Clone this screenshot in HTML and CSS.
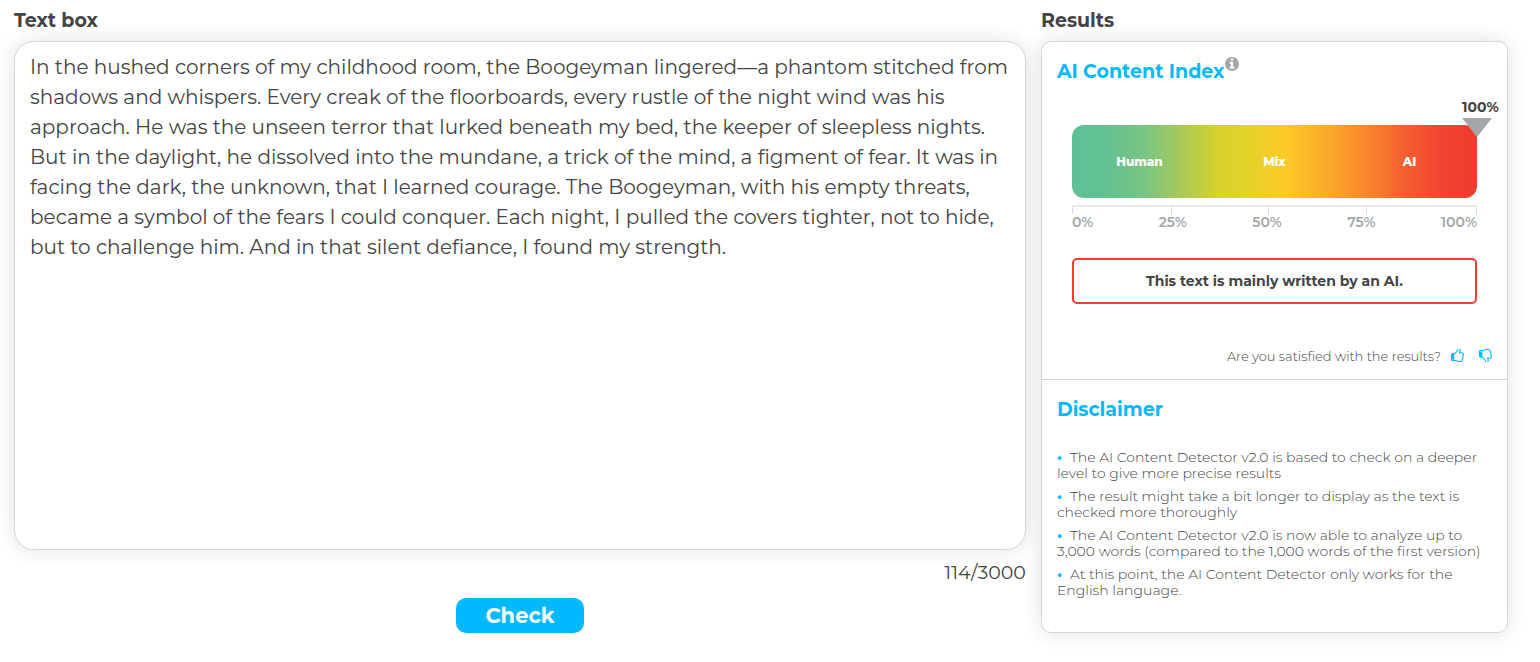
FILE: index.html
```html
<!DOCTYPE html>
<html lang="en">

<head>
    <meta charset="UTF-8">
    <meta name="viewport" content="width=device-width, initial-scale=1.0">
    <title>AI Content Detector</title>

    <link rel="stylesheet" href="styles.css">
</head>

<body>
    <main class="detector">
        <form class="editor">
            <label class="heading" for="text">Text box</label>
            <textarea class="text" id="text" spellcheck="false">In the hushed corners of my childhood room, the Boogeyman lingered—a phantom stitched from shadows and whispers. Every creak of the floorboards, every rustle of the night wind was his approach. He was the unseen terror that lurked beneath my bed, the keeper of sleepless nights. But in the daylight, he dissolved into the mundane, a trick of the mind, a figment of fear. It was in facing the dark, the unknown, that I learned courage. The Boogeyman, with his empty threats, became a symbol of the fears I could conquer. Each night, I pulled the covers tighter, not to hide, but to challenge him. And in that silent defiance, I found my strength.</textarea>
            <p class="counter">114/3000</p>
            <button class="check" type="button">Check</button>
        </form>

        <section class="results">
            <h2 class="heading">Results</h2>

            <div class="card">
                <div class="index">
                    <h3 class="title">AI Content Index<svg class="info" viewBox="128 128 1536 1536"><path d="M1152 1376v-160q0-14-9-23t-23-9h-96v-512q0-14-9-23t-23-9h-320q-14 0-23 9t-9 23v160q0 14 9 23t23 9h96v320h-96q-14 0-23 9t-9 23v160q0 14 9 23t23 9h448q14 0 23-9t9-23zm-128-896v-160q0-14-9-23t-23-9h-192q-14 0-23 9t-9 23v160q0 14 9 23t23 9h192q14 0 23-9t9-23zm640 416q0 209-103 385.500t-279.500 279.500-385.500 103-385.500-103-279.500-279.500-103-385.500 103-385.500 279.500-279.500 385.500-103 385.500 103 279.500 279.500 103 385.500z"/></svg></h3>

                    <div class="gauge">
                        <div class="bar">
                            <span>Human</span>
                            <span>Mix</span>
                            <span>AI</span>
                            <div class="marker" style="left: 100%">100%</div>
                        </div>
                        <div class="ticks"><i></i><i></i><i></i><i></i></div>
                        <div class="scale">
                            <span>0%</span>
                            <span>25%</span>
                            <span>50%</span>
                            <span>75%</span>
                            <span>100%</span>
                        </div>
                        <p class="verdict">This text is mainly written by an AI.</p>
                    </div>

                    <div class="feedback">
                        <span>Are you satisfied with the results?</span>
                        <button class="vote" type="button" aria-label="Yes">
                            <svg viewBox="0 128 1536 1536"><path id="thumb" d="M256 1344q0-26-19-45t-45-19-45 19-19 45 19 45 45 19 45-19 19-45zm1152-576q0-51-39-89.500t-89-38.500h-352q0-58 48-159.500t48-160.500q0-98-32-145t-128-47q-26 26-38 85t-30.500 125.500-59.500 109.500q-22 23-77 91-4 5-23 30t-31.500 41-34.500 42.500-40 44-38.500 35.500-40 27-35.500 9h-32v640h32q13 0 31.500 3t33 6.500 38 11 35 11.500 35.500 12.500 29 10.500q211 73 342 73h121q192 0 192-167 0-26-5-56 30-16 47.500-52.500t17.500-73.500-18-69q53-50 53-119 0-25-10-55.500t-25-47.500q32-1 53.500-47t21.500-81zm128-1q0 89-49 163 9 33 9 69 0 77-38 144 3 21 3 43 0 101-60 178 1 139-85 219.500t-227 80.500h-129q-96 0-189.500-22.500t-216.500-65.500q-116-40-138-40h-288q-53 0-90.500-37.500t-37.500-90.500v-640q0-53 37.500-90.500t90.500-37.500h274q36-24 137-155 58-75 107-128 24-25 35.500-85.500t30.500-126.500 62-108q39-37 90-37 84 0 151 32.500t102 101.500 35 186q0 93-48 192h176q104 0 180 76t76 179z"/></svg>
                        </button>
                        <button class="vote" type="button" aria-label="No">
                            <svg viewBox="0 128 1536 1536"><use href="#thumb" transform="translate(0 1792) scale(1 -1)"/></svg>
                        </button>
                    </div>
                </div>

                <div class="disclaimer">
                    <h3 class="title">Disclaimer</h3>
                    <ul class="notes">
                        <li>The AI Content Detector v2.0 is based to check on a deeper level to give more precise results</li>
                        <li>The result might take a bit longer to display as the text is checked more thoroughly</li>
                        <li>The AI Content Detector v2.0 is now able to analyze up to 3,000 words (compared to the 1,000 words of the first version)</li>
                        <li>At this point, the AI Content Detector only works for the English language.</li>
                    </ul>
                </div>
            </div>
        </section>
    </main>
</body>

</html>
```

FILE: styles.css
```css
* {
    box-sizing: border-box;
    margin: 0;
    padding: 0;
}

body {
    background: #fff;
    color: #444;
    font-family: Montserrat, Inter, sans-serif;
    font-weight: 400;
}

button,
textarea {
    font: inherit;
    color: inherit;
}

.detector {
    display: grid;
    grid-template-columns: 13fr 6fr;
    gap: 15px;
    padding: 8px 32px 24px 14px;
}

.editor,
.results {
    display: flex;
    flex-direction: column;
    min-width: 0;
}

.heading {
    font-size: 19px;
    font-weight: 700;
    line-height: 25px;
    margin-bottom: 8px;
}

.text,
.card {
    background: #fff;
    border: 1px solid #d6d6d6;
    box-shadow: 0 0 20px rgba(0, 0, 0, 0.12);
}

.text {
    display: block;
    width: 100%;
    height: 509px;
    padding: 10px 15px;
    border-radius: 20px;
    font-size: 20px;
    line-height: 30px;
    resize: none;
    outline: none;
}

.counter {
    font-size: 19px;
    line-height: 30px;
    margin: 8px 0 10px;
    text-align: right;
}

.check {
    align-self: center;
    width: 128px;
    height: 35px;
    border: 0;
    border-radius: 10px;
    background: #00b9ff;
    color: #fff;
    font-size: 21px;
    font-weight: 700;
    cursor: pointer;
}

.card {
    flex: 1;
    border-radius: 10px;
}

.title {
    color: #00b9ff;
    font-size: 19px;
    font-weight: 700;
    line-height: 30px;
}

.info {
    width: 14px;
    height: 14px;
    margin-left: 1px;
    fill: #a3a7aa;
    vertical-align: 7px;
}

/* index */

.index {
    padding: 15px 15px 14px;
    border-bottom: 1px solid #d6d6d6;
}

.gauge {
    padding: 38px 15px 0;
}

.bar {
    position: relative;
    display: grid;
    grid-template-columns: repeat(3, 1fr);
    align-items: center;
    height: 73px;
    border-radius: 12px;
    background: linear-gradient(90deg, #5dc195 0%, #62c193 8%, #78c581 18%, #a9c95a 27%, #d7d12b 36%, #e0d22a 42%, #fbcb27 52%, #fba62a 64%, #f9822d 74%, #f4602e 82%, #f24232 92%, #ef3b2e 100%);
    color: #fff;
    font-size: 12px;
    font-weight: 800;
    text-align: center;
}

.marker {
    position: absolute;
    top: -28px;
    margin-left: -15px;
    color: #444;
    font-size: 14px;
    font-weight: 700;
    line-height: 21px;
}

.marker::after {
    content: "";
    display: block;
    width: 30px;
    height: 19px;
    background: #a3a7aa;
    clip-path: polygon(0 0, 100% 0, 50% 100%);
}

.ticks {
    display: grid;
    grid-template-columns: 99fr 97fr 97fr 110fr;
    height: 9px;
    margin-top: 7px;
    border-top: 2px solid #e8e8e8;
    border-right: 1px solid #ddd;
}

.ticks i {
    border-left: 1px solid #ddd;
}

.scale {
    display: flex;
    justify-content: space-between;
    color: #a3a7aa;
    font-size: 14px;
    font-weight: 600;
    line-height: 17px;
}

.verdict {
    margin-top: 27px;
    padding: 11px;
    border: 2px solid #f13c2f;
    border-radius: 5px;
    font-size: 14px;
    font-weight: 700;
    line-height: 20px;
    text-align: center;
}

.feedback {
    display: flex;
    justify-content: flex-end;
    align-items: center;
    margin-top: 43px;
    font-size: 13px;
    font-weight: 300;
    line-height: 18px;
}

.vote {
    height: 14px;
    margin-left: 10px;
    padding-bottom: 1px;
    border: 0;
    background: none;
    cursor: pointer;
}

.vote + .vote {
    margin-left: 15px;
}

.vote svg {
    display: block;
    width: 13px;
    height: 13px;
    fill: #00b9ff;
}

/* disclaimer */

.disclaimer {
    padding: 15px 15px 27px;
}

.notes {
    margin-top: 24px;
    list-style: none;
    font-size: 14px;
    font-weight: 300;
    line-height: 16px;
}

.notes li {
    margin-bottom: 7px;
}

.notes li::before {
    content: "•";
    margin-right: 8px;
    color: #00b9ff;
    font-weight: 700;
}
```
